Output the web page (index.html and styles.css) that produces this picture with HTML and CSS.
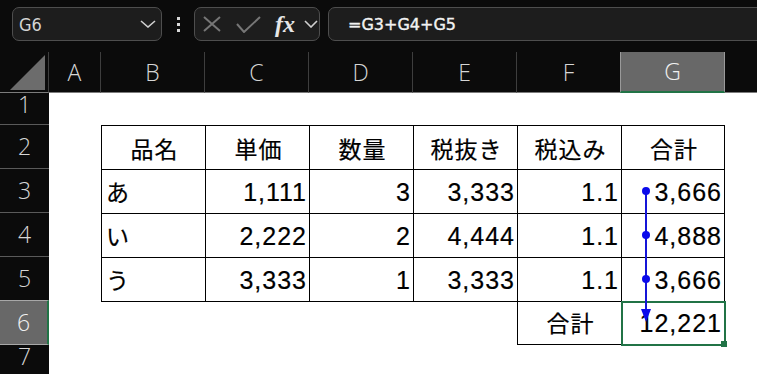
FILE: index.html
```html
<!DOCTYPE html>
<html lang="ja">

<head>
    <meta charset="UTF-8">
    <title>Sheet1</title>

    <link rel="stylesheet" href="styles.css">
</head>

<body>
    <div class="app">
        <div class="bar">
            <div class="namebox">
                <span>G6</span>
                <svg class="chev" width="16" height="8" viewBox="0 0 16 8"><polyline points="1,1 8,7 15,1" /></svg>
            </div>
            <div class="grip"><i></i><i></i><i></i></div>
            <div class="fxbox">
                <svg class="cancel" width="18" height="16" viewBox="0 0 18 16"><path d="M1 1 L17 15 M17 1 L1 15" /></svg>
                <svg class="enter" width="25" height="17" viewBox="0 0 25 17"><polyline points="1,8 8,16 24,1" /></svg>
                <span class="fx">fx</span>
                <svg class="chev small" width="14" height="8" viewBox="0 0 14 8"><polyline points="1,1 7,7 13,1" /></svg>
            </div>
            <div class="formula">=G3+G4+G5</div>
        </div>

        <div class="sheet">
            <!-- column headers -->
            <div class="corner"><svg width="35" height="35" viewBox="0 0 35 35"><polygon points="0,35 35,35 35,0" /></svg></div>
            <div class="col-head">A</div>
            <div class="col-head">B</div>
            <div class="col-head">C</div>
            <div class="col-head">D</div>
            <div class="col-head">E</div>
            <div class="col-head">F</div>
            <div class="col-head sel">G</div>
            <div class="col-head last"></div>

            <!-- row 1 -->
            <div class="row-head r1">1</div>
            <div class="blank wide"></div>

            <!-- row 2 -->
            <div class="row-head">2</div>
            <div class="blank"></div>
            <div class="t ctr top">品名</div>
            <div class="t ctr top">単価</div>
            <div class="t ctr top">数量</div>
            <div class="t ctr top">税抜き</div>
            <div class="t ctr top">税込み</div>
            <div class="t ctr top end">合計</div>
            <div class="blank"></div>

            <!-- row 3 -->
            <div class="row-head">3</div>
            <div class="blank"></div>
            <div class="t">あ</div>
            <div class="t num">1,111</div>
            <div class="t num">3</div>
            <div class="t num">3,333</div>
            <div class="t num">1.1</div>
            <div class="t num end">3,666</div>
            <div class="blank"></div>

            <!-- row 4 -->
            <div class="row-head">4</div>
            <div class="blank"></div>
            <div class="t">い</div>
            <div class="t num">2,222</div>
            <div class="t num">2</div>
            <div class="t num">4,444</div>
            <div class="t num">1.1</div>
            <div class="t num end">4,888</div>
            <div class="blank"></div>

            <!-- row 5 -->
            <div class="row-head">5</div>
            <div class="blank"></div>
            <div class="t">う</div>
            <div class="t num">3,333</div>
            <div class="t num">1</div>
            <div class="t num">3,333</div>
            <div class="t num">1.1</div>
            <div class="t num end">3,666</div>
            <div class="blank"></div>

            <!-- row 6 -->
            <div class="row-head sel">6</div>
            <div class="blank"></div>
            <div class="blank under"></div>
            <div class="t ctr foot">合計</div>
            <div class="t num foot end active">12,221<span class="handle"></span></div>
            <div class="blank"></div>

            <!-- row 7 -->
            <div class="row-head r7">7</div>
            <div class="blank wide"></div>

            <!-- trace precedents -->
            <svg class="trace" width="757" height="322" viewBox="0 0 757 322">
                <line x1="646" y1="139" x2="646" y2="258" />
                <circle cx="646" cy="139" r="4" />
                <circle cx="646" cy="183" r="4" />
                <circle cx="646" cy="227" r="4" />
                <polygon points="641,257 651,257 646,270" />
            </svg>
        </div>
    </div>
</body>

</html>
```

FILE: styles.css
```css
html,
body {
    height: 100%;
    padding: 0;
    margin: 0;
}

body {
    background-color: #0b0b0b;
    overflow: hidden;
}

.app {
    width: 757px;
    height: 374px;
    overflow: hidden;
}

/* formula bar */

.bar {
    display: flex;
    align-items: flex-start;
    height: 52px;
    padding: 7px 0 0 12px;
    box-sizing: border-box;
}

.namebox,
.fxbox,
.formula {
    height: 34px;
    box-sizing: border-box;
    border: 1px solid #4e4e4e;
    border-radius: 7px;
    background-color: #1d1d1d;
    display: flex;
    align-items: center;
}

.namebox {
    width: 150px;
    justify-content: space-between;
    padding: 0 5px 0 6px;
    color: #d4d4d4;
    font-family: "Liberation Sans Narrow", "DejaVu Sans Condensed", sans-serif;
    font-size: 18px;
}

.chev polyline {
    fill: none;
    stroke: #cfcfcf;
    stroke-width: 1.6;
}

.grip {
    width: 32px;
    height: 34px;
    display: flex;
    flex-direction: column;
    align-items: center;
    justify-content: center;
    gap: 3px;
}

.grip i {
    width: 3px;
    height: 3px;
    background-color: #d8d8d8;
}

.fxbox {
    width: 126px;
    padding-left: 8px;
}

.cancel path,
.enter polyline {
    fill: none;
    stroke: #767676;
    stroke-width: 2;
}

.enter {
    margin-left: 15px;
}

.fx {
    margin-left: 14px;
    width: 23px;
    color: #e6e6e6;
    font-family: "Liberation Serif", serif;
    font-style: italic;
    font-weight: bold;
    font-size: 24px;
    line-height: 1;
}

.chev.small {
    margin-left: 6px;
}

.formula {
    flex: 1;
    margin: 0 -14px 0 8px;
    padding-left: 19px;
    color: #f2f2f2;
    font-family: "DejaVu Sans", sans-serif;
    font-size: 16px;
    -webkit-text-stroke: 0.4px #f2f2f2;
}

/* sheet */

.sheet {
    position: relative;
    display: grid;
    grid-template-columns: 49px 52px repeat(6, 104px) 1fr;
    grid-template-rows: 41px 32px repeat(5, 44px) 1fr;
    height: 322px;
    background-color: #fff;
}

.corner,
.col-head,
.row-head {
    background-color: #0b0b0b;
    color: #d6d6d6;
    font-family: "Open Sans", sans-serif;
    font-weight: 300;
    font-size: 23px;
    line-height: 1;
    display: flex;
    align-items: center;
    justify-content: center;
    box-sizing: border-box;
}

.corner {
    align-items: flex-end;
    justify-content: flex-end;
    padding: 0 3px 2px 0;
    border-right: 1px solid #3e3e3e;
    border-bottom: 1px solid #7c7c7c;
}

.corner polygon {
    fill: #6c6c6c;
}

.col-head {
    border-right: 1px solid #3e3e3e;
    border-bottom: 1px solid #7c7c7c;
}

.col-head.sel {
    background-color: #686868;
    color: #f0f0f0;
    border-left: 1px solid #9a9a9a;
    border-right: 1px solid #9a9a9a;
    border-bottom: 2px solid #217346;
    margin-left: -1px;
}

.col-head.last {
    border-right: none;
}

.row-head {
    border-bottom: 1px solid #5a5a5a;
}

.row-head.r1 {
    padding-bottom: 8px;
}

.row-head.r7 {
    padding-bottom: 8px;
    border-bottom: none;
}

.row-head.sel {
    background-color: #686868;
    color: #f0f0f0;
    border-top: 1px solid #a8a8a8;
    border-bottom: 1px solid #a8a8a8;
    border-right: 2px solid #217346;
    margin-top: -1px;
}

.blank.wide {
    grid-column: 2 / -1;
}

.blank.under {
    grid-column: 3 / 7;
    border-top: 1px solid #000;
}

/* table cells */

.t {
    display: flex;
    align-items: flex-end;
    box-sizing: border-box;
    padding: 0 2px 8px 4px;
    border-left: 1px solid #000;
    border-top: 1px solid #000;
    font-family: "Liberation Sans", "Noto Sans CJK JP", sans-serif;
    font-size: 23px;
    letter-spacing: 1px;
    line-height: 1;
    color: #000;
    -webkit-text-stroke: 0.2px #000;
}

.t.top {
    padding-bottom: 7px;
}

.t.ctr {
    justify-content: center;
}

.t.num {
    justify-content: flex-end;
    font-size: 25px;
}

.t.end {
    border-right: 1px solid #000;
}

.t.foot {
    border-bottom: 1px solid #000;
}

.t.active {
    position: relative;
}

.t.active::after {
    content: "";
    position: absolute;
    top: -1px;
    left: -1px;
    right: -2px;
    bottom: -2px;
    border: 2px solid #217346;
    z-index: 2;
}

.handle {
    position: absolute;
    right: -3px;
    bottom: -3px;
    width: 6px;
    height: 6px;
    background-color: #217346;
    z-index: 3;
}

.trace {
    position: absolute;
    top: 0;
    left: 0;
    pointer-events: none;
    z-index: 4;
}

.trace line {
    stroke: #1515d8;
    stroke-width: 2;
}

.trace circle,
.trace polygon {
    fill: #0a0aeb;
}
```
